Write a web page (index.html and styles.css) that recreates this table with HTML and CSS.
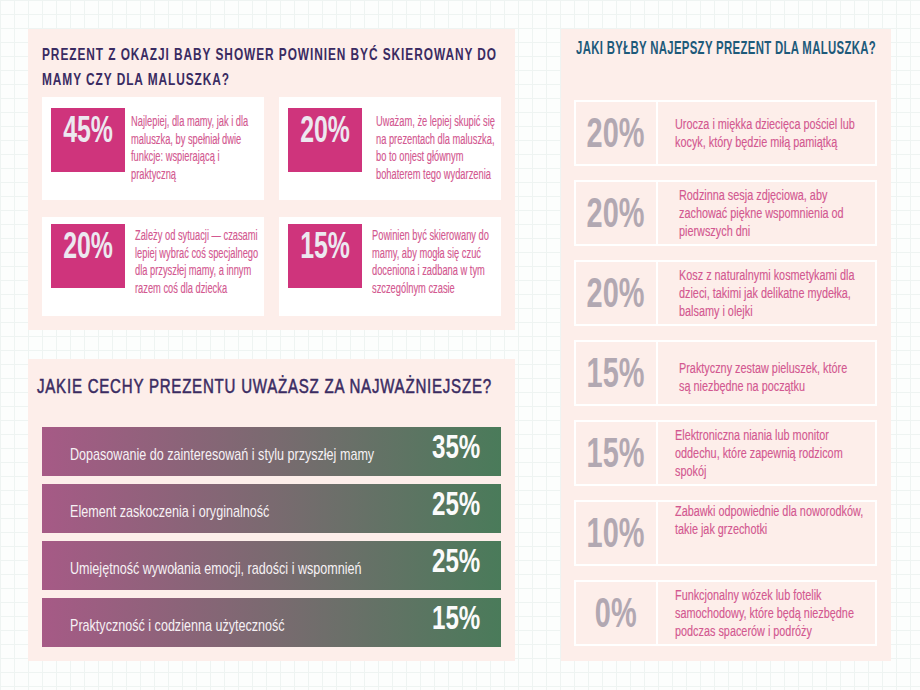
FILE: index.html
```html
<!DOCTYPE html>
<html lang="pl">
<head>
<meta charset="utf-8">
<title>Baby shower</title>
<link rel="stylesheet" href="styles.css">
</head>
<body>
<div class="page">
  <div class="left">
    <section class="card card-top">
      <h2 class="h-main">Prezent z okazji baby shower powinien być skierowany do<br>mamy czy dla maluszka?</h2>
      <div class="answers">
        <div class="answer answer--first">
          <div class="box"><span class="box-num">45%</span></div>
          <p class="answer-text">Najlepiej, dla mamy, jak i dla<br>maluszka, by spełniał dwie<br>funkcje: wspierającą i<br>praktyczną</p>
        </div>
        <div class="answer answer--first">
          <div class="box"><span class="box-num">20%</span></div>
          <p class="answer-text answer-text--wide">Uważam, że lepiej skupić się<br>na prezentach dla maluszka,<br>bo to onjest głównym<br>bohaterem tego wydarzenia</p>
        </div>
        <div class="answer">
          <div class="box"><span class="box-num">20%</span></div>
          <p class="answer-text answer-text--mid">Zależy od sytuacji — czasami<br>lepiej wybrać coś specjalnego<br>dla przyszłej mamy, a innym<br>razem coś dla dziecka</p>
        </div>
        <div class="answer">
          <div class="box"><span class="box-num">15%</span></div>
          <p class="answer-text answer-text--mid">Powinien być skierowany do<br>mamy, aby mogła się czuć<br>doceniona i zadbana w tym<br>szczególnym czasie</p>
        </div>
      </div>
    </section>
    <section class="card card-bars">
      <h2 class="h-bars">Jakie cechy prezentu uważasz za najważniejsze?</h2>
      <div class="bars">
        <div class="bar"><span class="bar-label">Dopasowanie do zainteresowań i stylu przyszłej mamy</span><span class="bar-num">35%</span></div>
        <div class="bar"><span class="bar-label">Element zaskoczenia i oryginalność</span><span class="bar-num">25%</span></div>
        <div class="bar"><span class="bar-label">Umiejętność wywołania emocji, radości i wspomnień</span><span class="bar-num">25%</span></div>
        <div class="bar"><span class="bar-label">Praktyczność i codzienna użyteczność</span><span class="bar-num">15%</span></div>
      </div>
    </section>
  </div>
  <section class="card card-right">
    <h2 class="h-right">Jaki byłby najepszy prezent dla maluszka?</h2>
    <div class="rows">
      <div class="row"><div class="row-num"><span>20%</span></div><p class="row-text">Urocza i miękka dziecięca pościel lub<br>kocyk, który będzie miłą pamiątką</p></div>
      <div class="row"><div class="row-num"><span>20%</span></div><p class="row-text row-text--in">Rodzinna sesja zdjęciowa, aby<br>zachować piękne wspomnienia od<br>pierwszych dni</p></div>
      <div class="row"><div class="row-num"><span>20%</span></div><p class="row-text row-text--in">Kosz z naturalnymi kosmetykami dla<br>dzieci, takimi jak delikatne mydełka,<br>balsamy i olejki</p></div>
      <div class="row"><div class="row-num"><span>15%</span></div><p class="row-text row-text--in row-text--low">Praktyczny zestaw pieluszek, które<br>są niezbędne na początku</p></div>
      <div class="row"><div class="row-num"><span>15%</span></div><p class="row-text">Elektroniczna niania lub monitor<br>oddechu, które zapewnią rodzicom<br>spokój</p></div>
      <div class="row"><div class="row-num"><span>10%</span></div><p class="row-text row-text--top">Zabawki odpowiednie dla noworodków,<br>takie jak grzechotki</p></div>
      <div class="row"><div class="row-num"><span>0%</span></div><p class="row-text">Funkcjonalny wózek lub fotelik<br>samochodowy, które będą niezbędne<br>podczas spacerów i podróży</p></div>
    </div>
  </section>
</div>
</body>
</html>
```
FILE: styles.css
```css
* { box-sizing: border-box; }
html, body { margin: 0; padding: 0; }
body {
  width: 920px;
  height: 690px;
  overflow: hidden;
  background-color: #fcfefd;
  background-image:
    linear-gradient(#eef4f2 1px, transparent 1px),
    linear-gradient(90deg, #eef4f2 1px, transparent 1px);
  background-size: 14px 14px;
  font-family: "Liberation Sans", Arial, sans-serif;
}
.page {
  display: flex;
  align-items: flex-start;
  padding: 29px 0 0 28px;
  gap: 46px;
}
.left {
  width: 487px;
  display: flex;
  flex-direction: column;
  gap: 29px;
}
.card { background: #fdeeea; }
h2 {
  margin: 0;
  text-transform: uppercase;
  white-space: nowrap;
  transform-origin: 0 0;
}

/* top card */
.card-top { height: 301px; padding: 13px 14px 0 14px; }
.h-main {
  color: #3a2b62;
  font-size: 16.5px;
  line-height: 25px;
  font-weight: 700;
  letter-spacing: 1.3px;
  transform: scaleX(0.72);
}
.answers {
  margin-top: 5px;
  display: grid;
  grid-template-columns: 222px 222px;
  grid-template-rows: 103px 99px;
  column-gap: 15px;
  row-gap: 17px;
}
.answer {
  background: #fff;
  display: flex;
  align-items: flex-start;
  padding: 7px 9px 0 9px;
}
.answer--first { padding-top: 11px; }
.box {
  width: 74px;
  height: 64px;
  flex: none;
  background: #cf347c;
  display: flex;
  justify-content: center;
  padding-top: 4px;
}
.box-num {
  display: block;
  color: #ece8f0;
  font-size: 36px;
  line-height: 36px;
  font-weight: 700;
  transform: scaleX(0.69);
  transform-origin: 50% 0;
}
.answer-text {
  margin: 5px 0 0 6px;
  color: #d35890;
  font-size: 14px;
  line-height: 17.5px;
  white-space: nowrap;
  -webkit-text-stroke: 0.15px #d35890;
  transform: scaleX(0.665);
  transform-origin: 0 0;
}
.answer-text--wide { margin-left: 14px; }
.answer-text--mid { margin-left: 10px; margin-top: 3px; }

/* bars card */
.card-bars { height: 302px; padding: 14px 14px 0 14px; }
.h-bars {
  color: #3a2b62;
  font-size: 19.5px;
  line-height: 26px;
  font-weight: 400;
  letter-spacing: 1px;
  margin-left: -5px;
  -webkit-text-stroke: 0.5px #3a2b62;
  transform: scaleX(0.772);
}
.bars {
  margin-top: 28px;
  display: flex;
  flex-direction: column;
  gap: 8px;
}
.bar {
  height: 49px;
  display: flex;
  align-items: flex-start;
  padding-left: 28px;
  background: linear-gradient(90deg, #a65a86 0%, #7a6a70 50%, #4a7b5a 100%);
}
.bar-label {
  display: block;
  width: 362px;
  flex: none;
  margin-top: 18px;
  color: #f6f1f4;
  font-size: 17px;
  line-height: 20px;
  white-space: nowrap;
  transform: scaleX(0.74);
  transform-origin: 0 0;
}
.bar-num {
  display: block;
  margin-top: 3px;
  color: #fbfbfb;
  font-size: 33.5px;
  line-height: 34px;
  font-weight: 700;
  white-space: nowrap;
  transform: scaleX(0.72);
  transform-origin: 0 0;
}

/* right card */
.card-right {
  width: 330px;
  height: 632px;
  padding: 7px 14px 14px 13px;
}
.h-right {
  color: #1e5a7a;
  font-size: 17.5px;
  line-height: 24px;
  font-weight: 700;
  letter-spacing: 0.5px;
  margin-left: 2px;
  transform: scaleX(0.65);
}
.rows {
  margin-top: 40px;
  display: flex;
  flex-direction: column;
  gap: 14px;
}
.row {
  height: 66px;
  border: 2px solid #fff;
  display: flex;
}
.row-num {
  width: 82px;
  flex: none;
  border-right: 2px solid #fff;
  display: flex;
  align-items: center;
  justify-content: center;
  color: #b2a8b2;
  font-size: 42.5px;
  font-weight: 700;
}
.row-num span {
  display: inline-block;
  transform: scaleX(0.68);
  transform-origin: 50% 50%;
}
.row-text {
  margin: 0 0 0 17px;
  align-self: center;
  color: #d35890;
  font-size: 15.5px;
  line-height: 18px;
  white-space: nowrap;
  -webkit-text-stroke: 0.15px #d35890;
  transform: scaleX(0.70);
  transform-origin: 0 0;
}
.row-text--in { margin-left: 21px; }
.row-text--top { align-self: flex-start; }
.row-text--low { padding-top: 8px; }
```
